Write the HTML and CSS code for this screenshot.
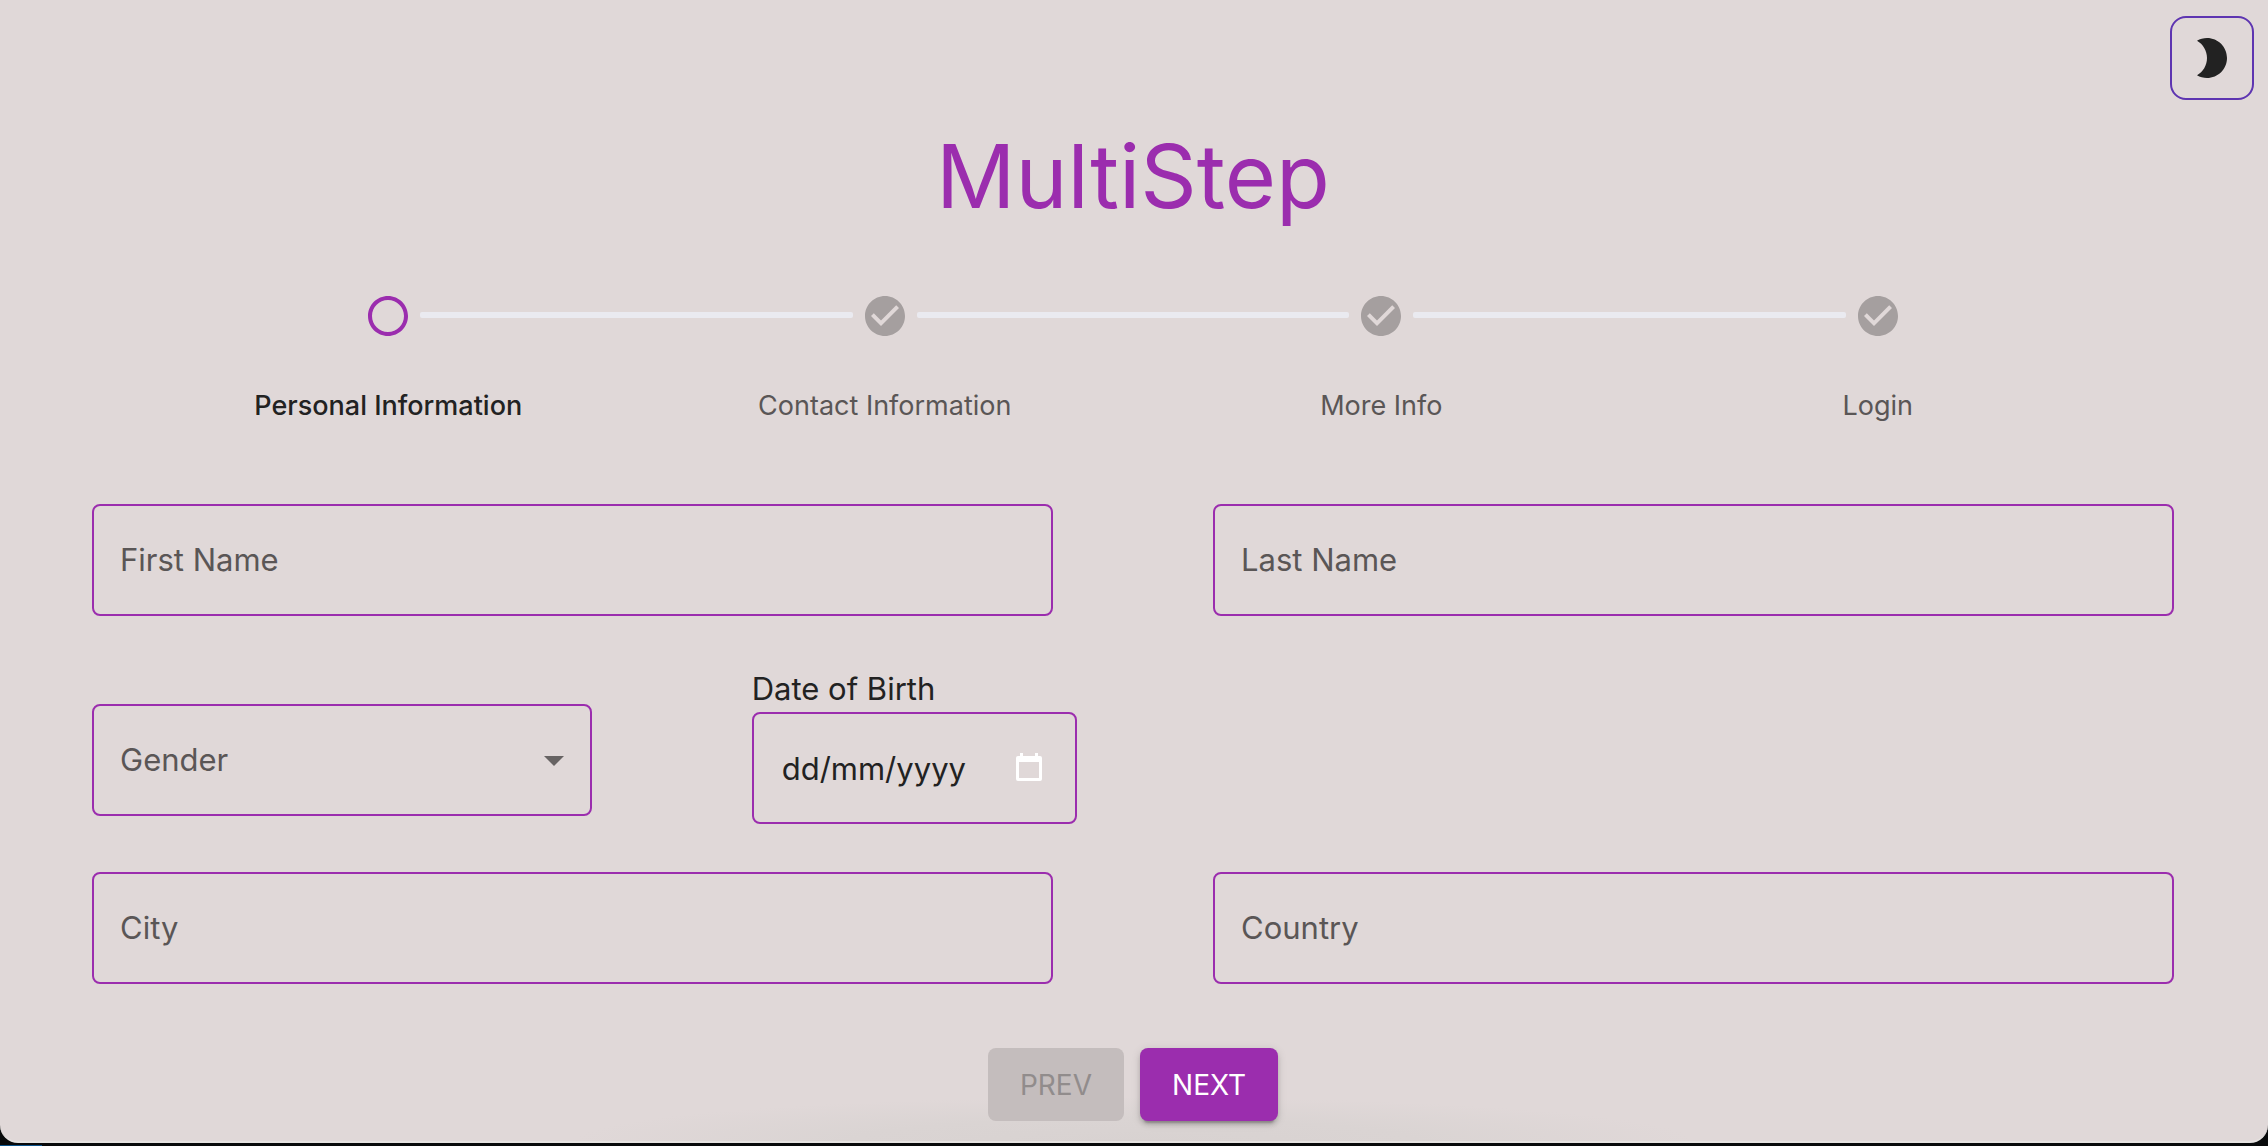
FILE: index.html
```html
<!DOCTYPE html>
<html lang="en">
<head>
<meta charset="utf-8">
<meta name="viewport" content="width=device-width, initial-scale=1">
<title>MultiStep</title>
<link rel="stylesheet" href="styles.css">
</head>
<body>
<div class="window">
  <button class="theme-toggle" type="button" aria-label="Toggle dark mode">
    <svg class="icon" viewBox="0 0 24 24" aria-hidden="true"><path d="M9.5 2c-1.82 0-3.53.5-5 1.35 2.99 1.73 5 4.95 5 8.65s-2.01 6.92-5 8.65c1.47.85 3.18 1.35 5 1.35 5.52 0 10-4.48 10-10S15.02 2 9.5 2z"/></svg>
  </button>
  <main class="content">
    <h1 class="title">MultiStep</h1>
    <ol class="stepper">
      <li class="step step-active" aria-current="step">
        <svg class="icon" viewBox="0 0 24 24" aria-hidden="true"><path d="M12 2C6.48 2 2 6.48 2 12s4.48 10 10 10 10-4.48 10-10S17.52 2 12 2zm0 18c-4.42 0-8-3.58-8-8s3.58-8 8-8 8 3.58 8 8-3.58 8-8 8z"/></svg>
        <span class="step-label">Personal Information</span>
      </li>
      <li class="step">
        <svg class="icon" viewBox="0 0 24 24" aria-hidden="true"><path d="M12 2C6.500 2 2 6.500 2 12s4.500 10 10 10 10-4.500 10-10S17.500 2 12 2zM10 17l-5-5 1.400-1.400 3.600 3.600 7.600-7.600L19 8l-9 9z"/></svg>
        <span class="step-label">Contact Information</span>
      </li>
      <li class="step">
        <svg class="icon" viewBox="0 0 24 24" aria-hidden="true"><path d="M12 2C6.500 2 2 6.500 2 12s4.500 10 10 10 10-4.500 10-10S17.500 2 12 2zM10 17l-5-5 1.400-1.400 3.600 3.600 7.600-7.600L19 8l-9 9z"/></svg>
        <span class="step-label">More Info</span>
      </li>
      <li class="step">
        <svg class="icon" viewBox="0 0 24 24" aria-hidden="true"><path d="M12 2C6.500 2 2 6.500 2 12s4.500 10 10 10 10-4.500 10-10S17.500 2 12 2zM10 17l-5-5 1.400-1.400 3.600 3.600 7.600-7.600L19 8l-9 9z"/></svg>
        <span class="step-label">Login</span>
      </li>
    </ol>
    <form class="form">
      <div class="row">
        <input class="field" type="text" aria-label="First Name" placeholder="First Name">
        <input class="field" type="text" aria-label="Last Name" placeholder="Last Name">
      </div>
      <div class="row">
        <div class="select">
          <select class="field" aria-label="Gender">
            <option value="" selected>Gender</option>
            <option>Female</option>
            <option>Male</option>
            <option>Other</option>
          </select>
          <svg class="icon select-arrow" viewBox="0 0 24 24" aria-hidden="true"><path d="M7 10l5 5 5-5z"/></svg>
        </div>
        <div class="date">
          <label class="date-label" for="birth">Date of Birth</label>
          <div class="date-box">
            <input class="date-input" id="birth" type="text" placeholder="dd/mm/yyyy">
            <button class="date-picker" type="button" aria-label="Choose date">
              <svg class="date-icon" viewBox="0 0 26 28" aria-hidden="true"><path fill-rule="evenodd" d="M4 0h3v3h12V0h3v3h2a2 2 0 0 1 2 2v21a2 2 0 0 1-2 2H2a2 2 0 0 1-2-2V5a2 2 0 0 1 2-2h2zM3 9v16h20V9z"/></svg>
            </button>
          </div>
        </div>
      </div>
      <div class="row">
        <input class="field" type="text" aria-label="City" placeholder="City">
        <input class="field" type="text" aria-label="Country" placeholder="Country">
      </div>
      <div class="actions">
        <button class="button" type="button" disabled>PREV</button>
        <button class="button button-primary" type="submit">NEXT</button>
      </div>
    </form>
  </main>
</div>
</body>
</html>
```
FILE: styles.css
```css
* {
  box-sizing: border-box;
}

body {
  margin: 0;
  padding-bottom: 4px;
  background: linear-gradient(#0b538b, #0b538b) left bottom / 42px 2px no-repeat, #080a0b;
  color: #222;
  font-family: Inter, "Liberation Sans", sans-serif;
  font-size: 31px;
}

.window {
  position: relative;
  min-height: calc(100vh - 4px);
  padding: 120px 94px 20px 92px;
  border-bottom: 2px solid #e5e2e0;
  border-radius: 0 0 18px 18px;
  background: radial-gradient(ellipse 560px 44px at 50% 100%, #d8d2d1 0, #dad4d3 50%, #e0d8d8 100%);
}

.icon {
  display: block;
  width: 48px;
  height: 48px;
  fill: currentColor;
}

.theme-toggle {
  position: absolute;
  top: 16px;
  right: 14px;
  padding: 16px;
  border: 2px solid #5e35b1;
  border-radius: 16px;
  background: none;
  color: #222;
}

.title {
  margin: 0 0 60px;
  color: #9b2dae;
  font-size: 88px;
  font-weight: 400;
  line-height: 112px;
  text-align: center;
}

.stepper {
  display: flex;
  margin: 0 48px 78px;
  padding: 0;
  list-style: none;
}

.step {
  position: relative;
  display: flex;
  flex: 1;
  flex-direction: column;
  align-items: center;
  gap: 46px;
  color: #a59f9f;
}

.step + .step::before {
  content: "";
  position: absolute;
  top: 20px;
  left: calc(-50% + 32px);
  right: calc(50% + 32px);
  height: 6px;
  border-radius: 2px;
  background: #eaeaf0;
}

.step-label {
  color: #5a5656;
  font-size: 27px;
  line-height: 40px;
}

.step-active {
  color: #9b2dae;
}

.step-active .step-label {
  color: #222;
  font-weight: 500;
}

.form {
  display: flex;
  flex-direction: column;
  gap: 48px;
}

.row {
  display: flex;
  gap: 160px;
}

.field {
  flex: 1;
  width: 100%;
  min-width: 0;
  height: 112px;
  margin: 0;
  padding: 0 26px 2px;
  border: 2px solid #9b2dae;
  border-radius: 8px;
  background: none;
  color: #5a5656;
  font: inherit;
  appearance: none;
}

.field::placeholder {
  color: #5a5656;
  opacity: 1;
}

.select {
  position: relative;
  width: 24%;
  padding-top: 40px;
}

.select-arrow {
  position: absolute;
  right: 14px;
  bottom: 40px;
  color: #676363;
  pointer-events: none;
}

.date-label {
  display: block;
  padding-top: 2px;
  line-height: 46px;
}

.date-box {
  display: flex;
  align-items: center;
  width: 325px;
  height: 112px;
  padding: 0 33px 2px 28px;
  border: 2px solid #9b2dae;
  border-radius: 8px;
}

.date-input {
  flex: 1;
  min-width: 0;
  padding: 2px 0 0;
  border: 0;
  background: none;
  color: #222;
  font: inherit;
}

.date-input::placeholder {
  color: #222;
  opacity: 1;
}

.date-picker {
  padding: 0;
  border: 0;
  background: none;
}

.date-icon {
  display: block;
  width: 26px;
  height: 28px;
  fill: #fff;
}

.actions {
  display: flex;
  justify-content: center;
  gap: 16px;
  padding-top: 16px;
}

.button {
  min-width: 136px;
  padding: 13px 32px 12px;
  border: 0;
  border-radius: 8px;
  background: #c4bdbd;
  color: #918c8c;
  font: inherit;
  font-size: 28px;
  line-height: 48px;
}

.button-primary {
  background: #9b2dae;
  box-shadow: 0 6px 2px -4px #0003, 0 4px 4px #0002, 0 2px 10px #0002;
  color: #fff;
}
```
